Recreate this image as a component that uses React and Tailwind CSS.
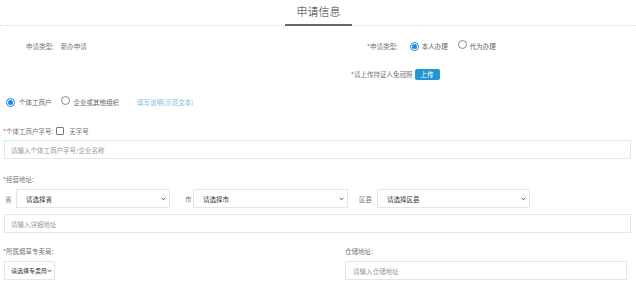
import React from "react";

const F = { fontFamily: '"Noto Sans CJK SC", "Noto Sans", sans-serif' };

function Radio({ checked }) {
  return checked ? (
    <span className="inline-flex items-center justify-center w-[9px] h-[9px] rounded-full border border-[#1e88e5] bg-white">
      <span className="w-[5px] h-[5px] rounded-full bg-[#1e88e5]" />
    </span>
  ) : (
    <span className="inline-block w-[9px] h-[9px] rounded-full border border-[#888] bg-white" />
  );
}

function Chevron() {
  return (
    <svg width="5" height="4" viewBox="0 0 5 4" className="shrink-0">
      <path d="M0.6 0.8 L2.5 2.8 L4.4 0.8" fill="none" stroke="#444" strokeWidth="0.9" />
    </svg>
  );
}

function Select({ w, text, pl = "pl-[9px]", pr = "pr-[3px]", size = "text-[6.5px]" }) {
  return (
    <div className={`${w} h-[19px] border border-[#e6e6e6] flex items-center justify-between whitespace-nowrap ${pl} ${pr} ${size} text-[#333] bg-white`}>
      <span>{text}</span>
      <Chevron />
    </div>
  );
}

function Star() {
  return <span className="text-[#e53935]">*</span>;
}

export default function App() {
  return (
    <div style={F} className="w-[636px] h-[292px] bg-white overflow-hidden text-[6.5px] text-[#777] leading-[12px]">
      {/* header */}
      <div className="h-[26px] border-b border-dotted border-[#dcdcdc] flex justify-center items-end">
        <div className="w-[67px] h-[26px] border-b-2 border-[#666] mb-[-1px] flex justify-center pt-[4px]">
          <span className="text-[11px] leading-[15px] text-[#333] ml-[1px] font-light">申请信息</span>
        </div>
      </div>

      {/* row 1 */}
      <div className="mt-[14px] h-[12px] flex items-center">
        <div className="w-[367px] flex items-center pl-[26px]">
          <span>申请类型:</span>
          <span className="ml-[7px]">新办申请</span>
        </div>
        <div className="flex items-center">
          <Star />
          <span>申请类型:</span>
          <span className="ml-[12px]"><Radio checked /></span>
          <span className="ml-[3px] text-[#666]">本人办理</span>
          <span className="ml-[10px]"><Radio /></span>
          <span className="ml-[3px] text-[#666]">代为办理</span>
        </div>
      </div>

      {/* row 2 */}
      <div className="mt-[16px] h-[12px] flex items-center pl-[351px]">
        <Star />
        <span>请上传持证人免冠照</span>
        <span className="ml-[2px] inline-flex items-center justify-center w-[25px] h-[11px] rounded-[2px] bg-[#2196d3] text-white text-[6.5px]">上传</span>
      </div>

      {/* row 3 */}
      <div className="mt-[16px] h-[12px] flex items-center pl-[6px]">
        <Radio checked />
        <span className="ml-[4px] text-[#666]">个体工商户</span>
        <span className="ml-[9px]"><Radio /></span>
        <span className="ml-[4px] text-[#666]">企业或其他组织</span>
        <span className="ml-[18px] text-[#7fb8d8]">填写说明(示范文本)</span>
      </div>

      {/* row 4 */}
      <div className="mt-[17px] h-[12px] flex items-center pl-[3px]">
        <Star />
        <span>个体工商户字号:</span>
        <span className="ml-[3px] inline-block w-[8px] h-[8px] border border-[#777] rounded-[1px]" />
        <span className="ml-[5px]">无字号</span>
      </div>
      <div className="mt-[3px] ml-[4px] w-[627px] h-[19px] border border-[#e6e6e6] flex items-center pl-[6px] text-[#999]">
        请输入个体工商户字号/企业名称
      </div>

      {/* address */}
      <div className="mt-[14px] h-[12px] flex items-center pl-[3px]">
        <Star />
        <span>经营地址:</span>
      </div>
      <div className="mt-[4px] flex items-center pl-[5px]">
        <span className="w-[11px]">省</span>
        <Select w="w-[154px]" text="请选择省" />
        <span className="ml-[15px] w-[8px]">市</span>
        <Select w="w-[155px]" text="请选择市" />
        <span className="ml-[11px] w-[18px]">区县</span>
        <Select w="w-[153px]" text="请选择区县" />
      </div>
      <div className="mt-[6px] ml-[4px] w-[627px] h-[19px] border border-[#e6e6e6] flex items-center pl-[6px] text-[#999]">
        请输入详细地址
      </div>

      {/* last row */}
      <div className="mt-[12px] flex">
        <div className="w-[345px] pl-[3px]">
          <div className="h-[12px] flex items-center">
            <Star />
            <span>所属烟草专卖局:</span>
          </div>
          <div className="mt-[4px] pl-[1px]">
            <Select w="w-[51px]" text="请选择专卖局" pl="pl-[6px]" pr="pr-[2px]" size="text-[6px]" />
          </div>
        </div>
        <div>
          <div className="h-[12px] flex items-center">
            <span>仓储地址:</span>
          </div>
          <div className="mt-[4px] w-[282px] h-[19px] border border-[#e6e6e6] flex items-center pl-[7px] text-[#999]">
            请输入仓储地址
          </div>
        </div>
      </div>
    </div>
  );
}
